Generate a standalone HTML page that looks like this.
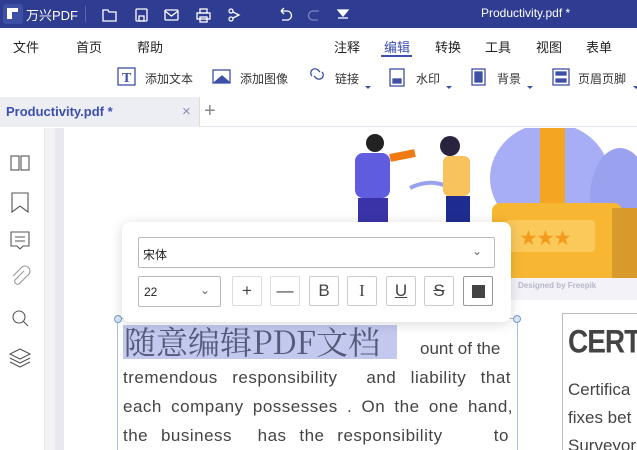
<!DOCTYPE html><html><head><meta charset="utf-8"><style>
*{margin:0;padding:0;box-sizing:border-box}
html,body{width:637px;height:450px;overflow:hidden}
body{position:relative;background:#fff;font-family:"Liberation Sans","Noto Sans CJK SC",sans-serif;color:#333}
#w{position:absolute;left:0;top:0;width:637px;height:450px;overflow:hidden}
.a{position:absolute}
.title{left:0;top:0;width:637px;height:28px;background:#2e3d92;color:#fff}
.menu span{position:absolute;top:37px;font-size:13px;color:#222}
.tb span{position:absolute;top:70px;font-size:12px;color:#333}
.btn{position:absolute;top:276px;width:30px;height:30px;border:1px solid #ccc;border-radius:2px;text-align:center;line-height:28px;font-size:17px;color:#444}
.ln{position:absolute;left:123px;font-size:17px;color:#444;letter-spacing:0.5px}
</style></head><body><div id="w">
<div class="a title">
<div class="a" style="left:3px;top:4px;width:20px;height:20px;background:#3e4fa6;border-radius:3px"></div>
<div class="a" style="left:7px;top:8px;width:11px;height:4px;background:#fff"></div>
<div class="a" style="left:7px;top:12px;width:5px;height:7px;background:#fff"></div>
<div class="a" style="left:26px;top:5px;font-size:13px">万兴PDF</div>
<div class="a" style="left:85px;top:6px;width:1px;height:16px;background:#5a67aa"></div>
<svg class="a" style="left:95px;top:4px" width="260" height="20" fill="none" stroke="#fff" stroke-width="1.3">
<path d="M8 6h5l1 2h7v9H8z"/><rect x="41" y="5" width="11" height="12" rx="1"/><path d="M44 12h5v5h-5z"/>
<rect x="70" y="6" width="13" height="10" rx="1"/><path d="M70 7l6.5 5 6.5-5"/>
<rect x="102" y="9" width="13" height="6"/><rect x="105" y="5" width="7" height="4"/><rect x="105" y="13" width="7" height="5"/>
<circle cx="136" cy="7" r="2"/><circle cx="136" cy="15" r="2"/><path d="M138 8l6 3-6 3"/>
<path d="M186 7h6a4 4 0 0 1 0 9h-5M186 7l3-3M186 7l3 3"/>
<path d="M224 7h-6a4 4 0 0 0 0 9h5" stroke="#7c86c0"/>
<path d="M243 6h10l-5 6z" fill="#fff"/><path d="M243 14h10" />
</svg>
<div class="a" style="left:481px;top:6px;font-size:12px">Productivity.pdf *</div>
</div>
<div class="menu"><span style="left:13px">文件</span><span style="left:76px">首页</span><span style="left:137px">帮助</span><span style="left:334px">注释</span><span style="left:384px;color:#3e4fb0">编辑</span><span style="left:435px">转换</span><span style="left:485px">工具</span><span style="left:536px">视图</span><span style="left:586px">表单</span></div>
<div class="a" style="left:381px;top:55px;width:31px;height:2px;background:#3e4fb0"></div>
<div class="tb"><span style="left:145px">添加文本</span><span style="left:240px">添加图像</span><span style="left:335px">链接</span><span style="left:416px">水印</span><span style="left:497px">背景</span><span style="left:578px">页眉页脚</span></div>
<svg class="a" style="left:0;top:60px" width="637" height="36" fill="none" stroke="#3e4fa6" stroke-width="1.3">
<rect x="118" y="8" width="17" height="17"/><text x="122" y="22" font-size="14" font-weight="bold" fill="#3e4fa6" stroke="none" font-family="Liberation Serif">T</text>
<rect x="213" y="10" width="17" height="13"/><path d="M215 22l7-6 7 6z" fill="#3e4fa6"/>
<path d="M312 16a4 4 0 0 1 6-6l2 2M322 12a4 4 0 0 1-6 6l-2-2"/>
<rect x="390" y="9" width="14" height="17"/><rect x="393" y="19" width="8" height="4" fill="#3e4fa6"/>
<rect x="472" y="9" width="13" height="16"/><rect x="475" y="12" width="7" height="10" fill="#3e4fa6"/>
<rect x="553" y="9" width="16" height="16"/><rect x="556" y="12" width="10" height="3" fill="#3e4fa6"/><rect x="556" y="19" width="10" height="3" fill="#3e4fa6"/>
<g fill="#3e4fa6" stroke="none"><path d="M365 26h6l-3 3z"/><path d="M446 26h6l-3 3z"/><path d="M527 26h6l-3 3z"/><path d="M633 26h6l-3 3z"/></g>
</svg>
<div class="a" style="left:0;top:97px;width:637px;height:30px;background:#fff;border-bottom:1px solid #e3e5ec"></div>
<div class="a" style="left:0;top:97px;width:200px;height:30px;background:#eceef4;border-right:1px solid #ddd"></div>
<div class="a" style="left:6px;top:104px;font-size:13px;font-weight:bold;color:#3e4fb0">Productivity.pdf *</div>
<div class="a" style="left:182px;top:103px;font-size:15px;color:#8890b0">×</div>
<div class="a" style="left:204px;top:100px;font-size:20px;color:#888">+</div>
<div class="a" style="left:44px;top:128px;width:11px;height:322px;background:#f3f3f5;border-left:1px solid #e6e6ea"></div>
<div class="a" style="left:55px;top:128px;width:9px;height:322px;background:#e8e9ee"></div>
<svg class="a" style="left:0;top:128px" width="44" height="322" fill="none" stroke="#555" stroke-width="1.1">
<rect x="11" y="28" width="8" height="14"/><rect x="21" y="28" width="8" height="14"/>
<path d="M12 65h16v19l-8-6-8 6z"/>
<path d="M11 104h18v14h-6l-3 3-3-3h-6z"/><path d="M15 109h10M15 113h10"/>
<path d="M24 143l-9 9a3 3 0 0 0 4 4l10-10a5 5 0 0 0-7-7l-9 9" stroke="#999"/>
<circle cx="19" cy="189" r="6"/><path d="M23 193l5 5"/>
<path d="M20 221l10 5-10 5-10-5z"/><path d="M10 230l10 5 10-5M10 234l10 5 10-5"/>
</svg>
<svg class="a" style="left:330px;top:128px" width="307" height="172">
<rect x="0" y="0" width="307" height="172" fill="#fff"/>
<rect x="150" y="128" width="157" height="44" fill="#f2f2f8"/>
<ellipse cx="220" cy="50" rx="60" ry="55" fill="#a8aef5"/>
<ellipse cx="290" cy="70" rx="30" ry="50" fill="#9aa2f0"/>
<path d="M80 60c20-10 40-5 50 10" stroke="#9aa2f0" stroke-width="4" fill="none"/>
<rect x="210" y="0" width="25" height="80" fill="#f4a623"/>
<rect x="162" y="75" width="130" height="75" rx="8" fill="#f7b733"/>
<rect x="175" y="92" width="90" height="32" rx="4" fill="#fbc85a"/>
<text x="190" y="116" font-size="17" fill="#f49b1c">★★★</text>
<rect x="282" y="80" width="25" height="70" fill="#d89a2a"/>
<circle cx="45" cy="15" r="9" fill="#222"/><rect x="25" y="25" width="35" height="45" rx="8" fill="#5f5ce0"/>
<rect x="28" y="70" width="30" height="50" fill="#3a33a8"/>
<path d="M60 30l25 -5" stroke="#f07b12" stroke-width="8"/>
<circle cx="120" cy="18" r="10" fill="#2a2340"/><rect x="113" y="28" width="27" height="40" rx="6" fill="#f8c35c"/>
<rect x="116" y="68" width="24" height="52" fill="#1f2c8f"/>
<text x="188" y="160" font-size="8" fill="#b7b7c7" font-weight="bold">Designed by Freepik</text>
</svg>
<div class="a" style="left:562px;top:313px;width:80px;height:140px;border:1px solid #bbb;border-right:none"></div>
<div class="a" style="left:568px;top:326px;font-size:28px;font-weight:bold;color:#444;letter-spacing:-1px;transform:scaleY(1.15)">CERTIFI</div>
<div class="a" style="left:568px;top:376px;font-size:17px;color:#444;line-height:28px">Certifica<br>fixes bet<br>Surveyor</div>
<div class="a" style="left:117px;top:318px;width:401px;height:140px;border:1px solid #a8bedb"></div>
<div class="a" style="left:114px;top:315px;width:8px;height:8px;border:1px solid #7a9cc6;border-radius:50%;background:#dbe6f3"></div>
<div class="a" style="left:513px;top:315px;width:8px;height:8px;border:1px solid #7a9cc6;border-radius:50%;background:#dbe6f3"></div>
<div class="a" style="left:123px;top:325px;width:274px;height:34px;background:#c3c8ee"></div>
<div class="a" style="left:124px;top:322px;font-size:32px;color:#555a7a;font-family:'Noto Serif CJK SC','Liberation Serif',serif;line-height:38px">随意编辑PDF文档</div>
<div class="a" style="left:420px;top:339px;font-size:17px;color:#444">ount of the</div>
<div class="ln" style="top:368px;width:388px;text-align:justify;text-align-last:justify">tremendous responsibility &nbsp;and liability that</div>
<div class="ln" style="top:397px;width:390px;text-align:justify;text-align-last:justify">each company possesses . On the one hand,</div>
<div class="ln" style="top:426px;width:386px;text-align:justify;text-align-last:justify">the business &nbsp;has the responsibility &nbsp;&nbsp;&nbsp;to</div>
<div class="a" style="left:122px;top:222px;width:389px;height:100px;background:#fff;border-radius:8px;box-shadow:0 2px 12px rgba(0,0,0,.15)"></div>
<div class="a" style="left:138px;top:237px;width:357px;height:31px;border:1px solid #bbb;border-radius:2px;font-size:12px;padding:8px 4px;color:#222">宋体<span style="position:absolute;right:12px;top:6px;color:#666">⌄</span></div>
<div class="a" style="left:138px;top:276px;width:83px;height:31px;border:1px solid #bbb;border-radius:2px;font-size:12px;padding:8px 5px;color:#222">22<span style="position:absolute;right:10px;top:6px;color:#666">⌄</span></div>
<div class="btn" style="left:232px;border-color:#ddd">+</div>
<div class="btn" style="left:270px;border-color:#ddd">—</div>
<div class="btn" style="left:309px">B</div>
<div class="btn" style="left:347px;font-family:'Liberation Serif',serif">I</div>
<div class="btn" style="left:386px;text-decoration:underline">U</div>
<div class="btn" style="left:424px;text-decoration:line-through">S</div>
<div class="btn" style="left:463px;border-color:#999"><div style="width:13px;height:13px;background:#444;margin:8px auto"></div></div>
</div></body></html>
